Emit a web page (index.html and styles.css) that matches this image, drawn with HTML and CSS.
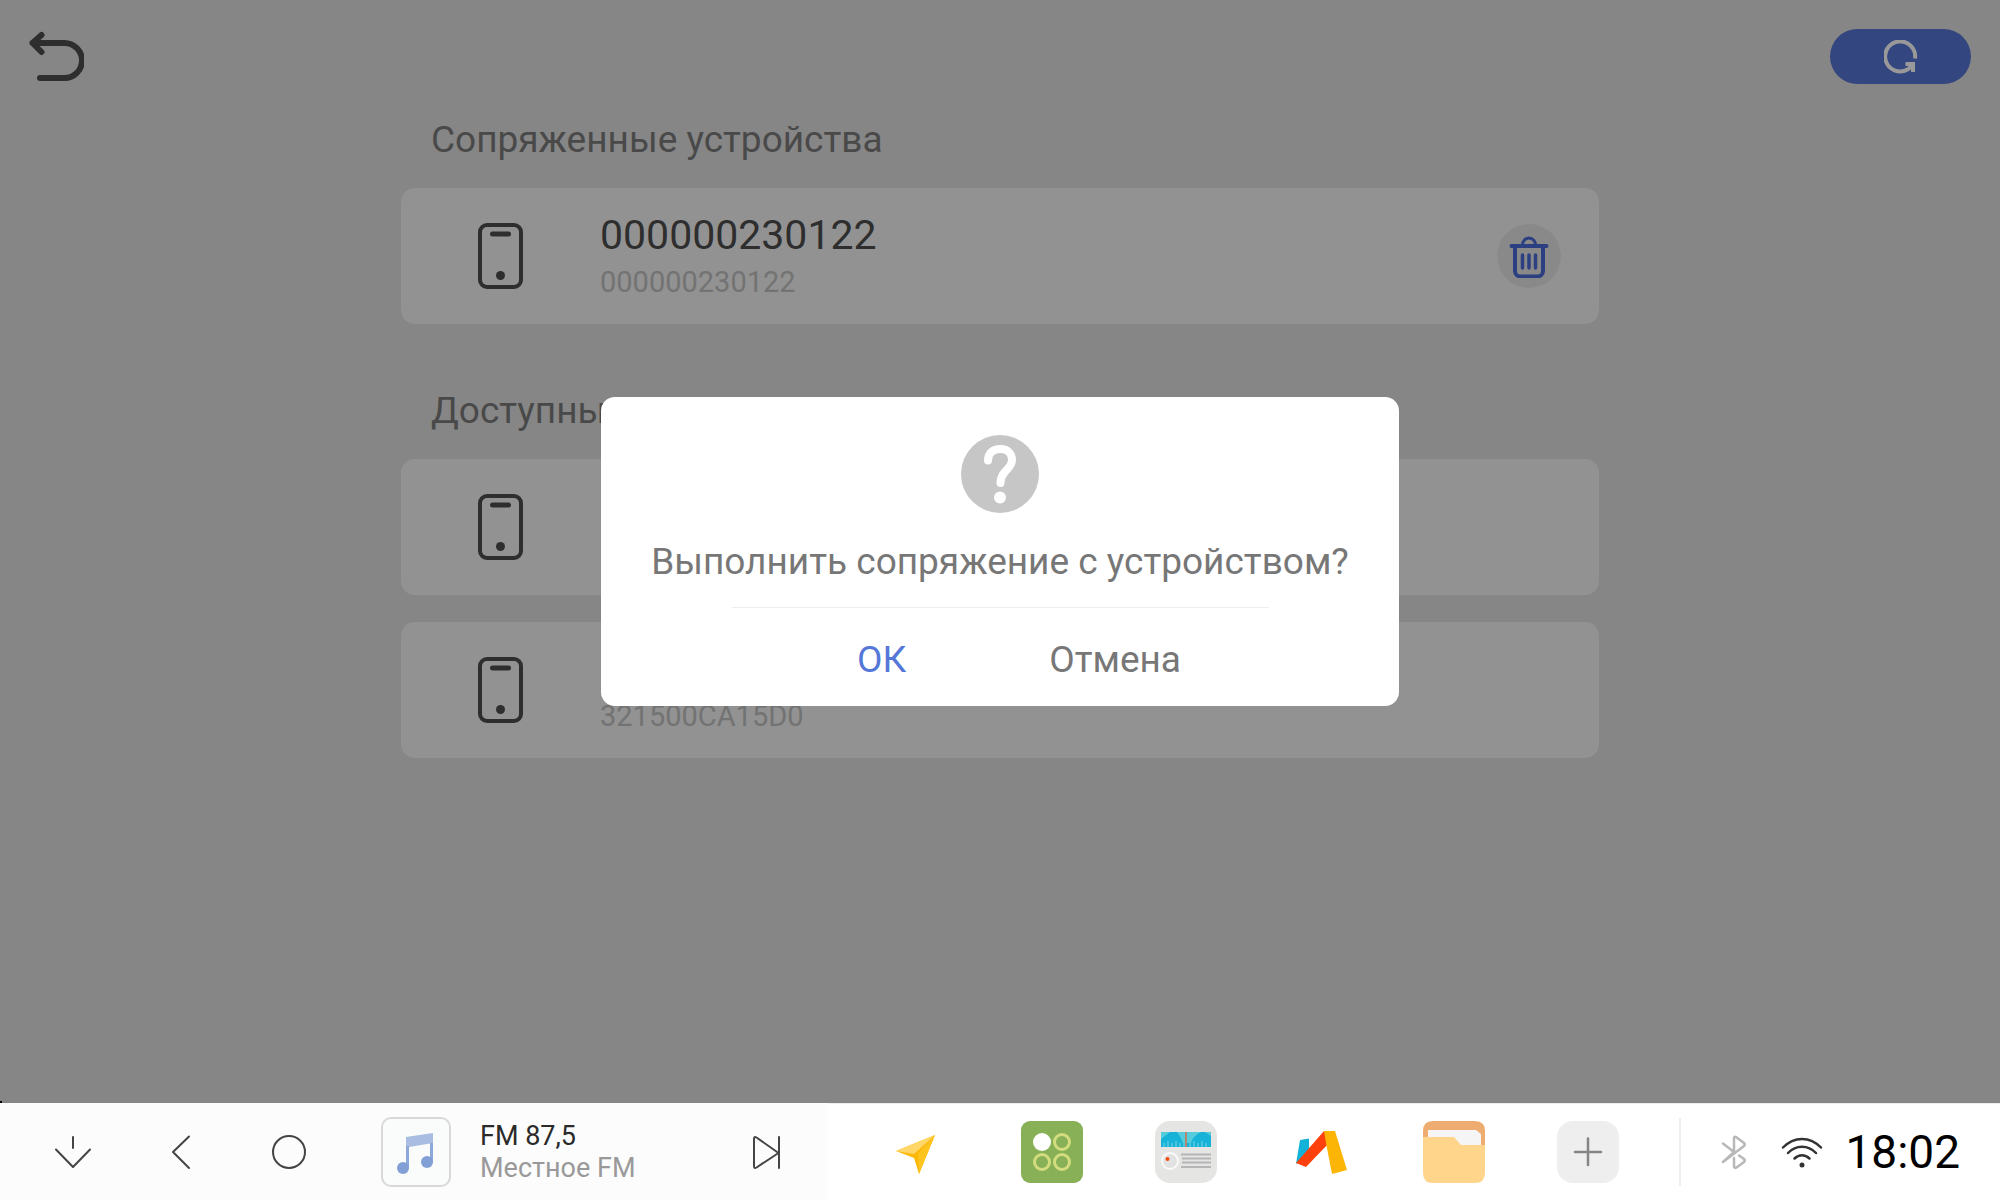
FILE: index.html
```
<!DOCTYPE html>
<html lang="ru">
<head>
    <meta charset="UTF-8">
    <meta name="viewport" content="width=device-width, initial-scale=1.0">
    <title>Bluetooth</title>
    <link rel="stylesheet" href="styles.css">
</head>
<body>
    <svg class="sprite" aria-hidden="true">
        <symbol id="phone" viewBox="0 0 46 66">
            <rect x="3" y="2" width="41" height="62" rx="7" fill="none" stroke="currentColor" stroke-width="4"/>
            <path d="M15.500 11h16" stroke="currentColor" stroke-width="5" stroke-linecap="round"/>
            <circle cx="23.500" cy="52.500" r="4.500" fill="currentColor"/>
        </symbol>
    </svg>

    <main class="screen">
        <header class="top">
            <button class="back" type="button" aria-label="Назад">
                <svg width="56" height="52" viewBox="0 0 56 52" fill="none" stroke="currentColor" stroke-width="6" stroke-linecap="round" stroke-linejoin="round">
                    <path d="M5 14H36.500a17.500 17.500 0 0 1 0 35H12"/>
                    <path d="M13.500 6L4.500 14L13.500 23"/>
                </svg>
            </button>
            <button class="refresh" type="button" aria-label="Обновить">
                <svg width="34" height="34" viewBox="0 0 34 34" fill="none" stroke="currentColor" stroke-width="4">
                    <path d="M31 18.500A15 15 0 1 0 23.500 29.500L28 26"/>
                    <path d="M21.500 24H29V32" stroke-width="4"/>
                </svg>
            </button>
        </header>

        <div class="list">
            <section class="group">
                <h2>Сопряженные устройства</h2>
                <div class="card">
                    <svg class="phone"><use href="#phone"/></svg>
                    <div class="info">
                        <p class="name">000000230122</p>
                        <p class="addr">000000230122</p>
                    </div>
                    <button class="del" type="button" aria-label="Удалить">
                        <svg width="40" height="44" viewBox="0 0 40 44" fill="none" stroke="currentColor" stroke-width="4">
                            <path d="M2.500 12H37.500" stroke-linecap="round"/>
                            <path d="M13.500 11a6.500 7 0 0 1 13 0" stroke-width="3"/>
                            <path d="M6 12V37a5.500 5.500 0 0 0 5.500 5.500H28.500a5.500 5.500 0 0 0 5.500-5.500V12"/>
                            <path d="M13.500 21V34M20 21V34M26.500 21V34" stroke-width="3.500" stroke-linecap="round"/>
                        </svg>
                    </button>
                </div>
            </section>

            <section class="group">
                <h2>Доступные устройства</h2>
                <div class="card">
                    <svg class="phone"><use href="#phone"/></svg>
                </div>
                <div class="card">
                    <svg class="phone"><use href="#phone"/></svg>
                    <div class="info">
                        <p class="name"></p>
                        <p class="addr">321500CA15D0</p>
                    </div>
                </div>
            </section>
        </div>

        <div class="mask">
            <div class="dialog" role="dialog" aria-modal="true" aria-labelledby="ask">
                <svg class="question" width="78" height="78" viewBox="0 0 78 78">
                    <circle cx="39" cy="39" r="39" fill="#c6c6c6"/>
                    <path d="M27 25.500C27 18 32 14 39.500 14C47 14 51 19 51 25C51 34.500 39.500 35.500 39.500 48" fill="none" stroke="#fff" stroke-width="8" stroke-linecap="round"/>
                    <circle cx="39" cy="62.500" r="6" fill="#fff"/>
                </svg>
                <p id="ask">Выполнить сопряжение с устройством?</p>
                <div class="actions">
                    <button class="ok" type="button">ОК</button>
                    <button class="cancel" type="button">Отмена</button>
                </div>
            </div>
        </div>
    </main>

    <footer class="bar">
        <div class="player">
            <div class="keys">
                <button type="button" aria-label="Свернуть">
                    <svg width="36" height="36" viewBox="0 0 36 36"><path d="M18 3V14M1 15.500L18 33L35 15.500"/></svg>
                </button>
                <button type="button" aria-label="Назад">
                    <svg width="36" height="36" viewBox="0 0 36 36"><path d="M26 2.500L10 18L26 34"/></svg>
                </button>
                <button type="button" aria-label="Домой">
                    <svg width="36" height="36" viewBox="0 0 36 36"><circle cx="18" cy="18" r="16"/></svg>
                </button>
            </div>
            <svg class="cover" width="70" height="70" viewBox="0 0 70 70">
                <rect x="1" y="1" width="68" height="68" rx="9" fill="#f9fcfb" stroke="#dcd8da" stroke-width="2"/>
                <path d="M25 20L52 16V26L28 30H25Z" fill="#a9bde2"/>
                <path d="M25 29h3V51h-3zM49 26h3V46h-3z" fill="#8da8da"/>
                <circle cx="22" cy="51" r="6" fill="#83a0d6"/>
                <circle cx="46" cy="45" r="6" fill="#83a0d6"/>
            </svg>
            <div class="track">
                <p class="station">FM 87,5</p>
                <p class="source">Местное FM</p>
            </div>
            <button type="button" aria-label="Следующая">
                <svg width="36" height="36" viewBox="0 0 36 36"><path d="M6 5V32Q6 35 8.500 33.500L30.500 19L8.500 3.500Q6 2 6 5ZM31 3V34"/></svg>
            </button>
        </div>

        <nav class="apps">
            <a href="#" aria-label="Навигатор">
                <svg viewBox="0 0 62 62">
                    <path d="M9 30L48 14L32 53L27 37Z" fill="#fcb90a"/>
                    <path d="M9 30L48 14L27 33Z" fill="#ffd668"/>
                    <path d="M48 14L32 53L31 33Z" fill="#fdc41f"/>
                </svg>
            </a>
            <a href="#" aria-label="Приложения">
                <svg viewBox="0 0 62 62">
                    <rect width="62" height="62" rx="9" fill="#88b056"/>
                    <circle cx="21" cy="21" r="9" fill="#fff"/>
                    <g fill="none" stroke="#d3dd7e" stroke-width="3">
                        <circle cx="41" cy="21" r="7.500"/>
                        <circle cx="21" cy="41" r="7.500"/>
                        <circle cx="41" cy="41" r="7.500"/>
                    </g>
                </svg>
            </a>
            <a href="#" aria-label="Радио">
                <svg viewBox="0 0 62 62">
                    <rect width="62" height="62" rx="15" fill="#e5e5e3"/>
                    <path d="M6 11H56V26H6Z" fill="#16b2d8"/>
                    <path d="M6 11H15L6 18ZM22 11H46Q38 15 36 22H28Q26 16 22 11ZM50 11H56V15Z" fill="#56cbdc"/>
                    <path d="M9 22v4M13 20v6M17 22v4M21 20v6M25 22v4M29 22v4M35 22v4M39 20v6M43 22v4M47 20v6M51 22v4" stroke="#7cd6e4"/>
                    <path d="M31 11V26" stroke="#b0886e" stroke-width="2"/>
                    <circle cx="15" cy="40" r="8" fill="#e2e2e2" stroke="#fafafa" stroke-width="2"/>
                    <circle cx="12.500" cy="38" r="2" fill="#fa4a10"/>
                    <path d="M26 33.500H56M27 37.500H56M27 41.500H56M26 46H56" stroke="#b4b6b6" stroke-width="2"/>
                </svg>
            </a>
            <a href="#" aria-label="Авто">
                <svg viewBox="0 0 62 62">
                    <path d="M11 19L20 17.500V34L7 43Z" fill="#14b2d8"/>
                    <path d="M35 10L40 12V22L17 46L7 42Z" fill="#fd400c"/>
                    <path d="M35 10H46L58 49L43 53L37 22Z" fill="#fdb505"/>
                </svg>
            </a>
            <a href="#" aria-label="Файлы">
                <svg viewBox="0 0 62 62">
                    <path d="M0 30V10Q0 0 10 0H52Q62 0 62 10V30Z" fill="#efac70"/>
                    <path d="M5 9H53L58 13V26H5Z" fill="#f5f5f5"/>
                    <path d="M0 16H31L38 24H62V52Q62 62 52 62H10Q0 62 0 52Z" fill="#fed58a"/>
                </svg>
            </a>
            <a href="#" aria-label="Добавить">
                <svg viewBox="0 0 62 62">
                    <rect width="62" height="62" rx="16" fill="#eee"/>
                    <path d="M18 31H44M31 17.500V44" stroke="#858585" stroke-width="2.500" stroke-linecap="round"/>
                </svg>
            </a>
        </nav>

        <div class="status">
            <svg width="30" height="36" viewBox="0 0 30 36" fill="none" stroke="#b8b8b8" stroke-width="2.500" stroke-linecap="round" stroke-linejoin="round">
                <path d="M4 9.500L15 18L4 28M15 18V4Q15 2 17 3L25 9Q26.500 10.500 25 12L4 28M15 24V32Q15 34.500 17.500 33.500L25 28Q26.500 26.500 25 25L20 21.500"/>
            </svg>
            <svg width="42" height="32" viewBox="0 0 42 32" fill="none" stroke="#333" stroke-width="2.500" stroke-linecap="round">
                <path d="M2 11.500C13 0 29 0 40 11.500M7 17C15 8.500 27 8.500 35 17M13.500 22.500C18 18 24 18 28.500 22.500"/>
                <circle cx="21" cy="29" r="2.500" fill="#333" stroke="none"/>
            </svg>
            <time datetime="18:02">18:02</time>
        </div>
    </footer>
</body>
</html>
```
FILE: styles.css
```
*{
    margin: 0;
    padding: 0;
    box-sizing: border-box;
}
body{
    display: flex;
    flex-direction: column;
    min-height: 100vh;
    font-family: Roboto, "Noto Sans", sans-serif;
    background: #fff;
}
button{
    border: 0;
    background: none;
    font: inherit;
    color: inherit;
    cursor: pointer;
}
svg{
    display: block;
    flex-shrink: 0;
}
.sprite{
    position: absolute;
    width: 0;
    height: 0;
}

/* device list */
.screen{
    position: relative;
    flex: 1;
    background: #e0e0e0;
    color: #4e4e4e;
}
.top{
    display: flex;
    justify-content: space-between;
    align-items: flex-start;
    padding: 29px 29px 0 28px;
}
.refresh{
    display: flex;
    justify-content: center;
    align-items: center;
    width: 141px;
    height: 55px;
    border-radius: 28px;
    background: #5775d4;
    color: #fff;
}
.list{
    width: 90%;
    max-width: 1198px;
    margin: 0 auto;
    padding-top: 32px;
}
.group{
    margin-bottom: 63px;
}
h2{
    padding: 0 30px;
    margin-bottom: 24px;
    font-size: 37px;
    line-height: 48px;
    font-weight: 400;
    color: #7b7b7b;
}
.card{
    display: flex;
    align-items: center;
    height: 136px;
    padding: 0 38px 0 76px;
    margin-bottom: 27px;
    border-radius: 14px;
    background: #f4f4f4;
}
.phone{
    width: 46px;
    height: 66px;
}
.info{
    flex: 1;
    margin-left: 77px;
    padding-top: 4px;
}
.name{
    min-height: 48px;
    font-size: 41px;
    line-height: 48px;
}
.addr{
    font-size: 29px;
    line-height: 46px;
    color: #c0c0c0;
}
.del{
    display: flex;
    justify-content: center;
    align-items: center;
    width: 64px;
    height: 64px;
    border-radius: 50%;
    background: #e5e5e5;
    color: #486ad8;
}

/* dialog */
.mask{
    position: absolute;
    inset: 0;
    display: flex;
    justify-content: center;
    align-items: center;
    background: rgba(0,0,0,.4);
}
.mask::after{
    content: "";
    position: absolute;
    left: 0;
    bottom: 0;
    width: 2px;
    height: 2px;
    background: #000;
}
.dialog{
    display: flex;
    flex-direction: column;
    align-items: center;
    width: 798px;
    max-width: 90%;
    padding: 38px 40px 22px;
    border-radius: 14px;
    background: #fff;
    font-size: 37px;
    line-height: 48px;
    color: #777;
}
#ask{
    margin-top: 25px;
}
.actions{
    display: flex;
    justify-content: center;
    gap: 143px;
    width: 537px;
    max-width: 100%;
    margin-top: 21px;
    padding: 28px 0 0 38px;
    border-top: 1px solid #eee;
}
.ok{
    color: #5577d8;
}

/* bottom bar */
.bar{
    display: flex;
    height: 97px;
    box-shadow: inset 0 1px #eee;
}
.player{
    display: flex;
    align-items: center;
    flex: 0 0 828px;
    padding: 0 44px 0 55px;
    background: #fcfcfc;
}
.player button svg{
    fill: none;
    stroke: #444;
    stroke-width: 2;
    stroke-linejoin: round;
    stroke-linecap: round;
}
.keys{
    display: flex;
    gap: 72px;
    margin-right: 74px;
}
.track{
    flex: 1;
    margin-left: 29px;
    font-size: 27px;
    line-height: 32px;
}
.station{
    color: #2a2a2a;
}
.source{
    color: #999;
}
.apps{
    display: flex;
    align-items: center;
    gap: 72px;
    padding-left: 59px;
}
.apps svg{
    width: 62px;
    height: 62px;
}
.status{
    display: flex;
    align-items: center;
    align-self: center;
    height: 68px;
    margin-left: auto;
    padding: 0 40px 0 38px;
    border-left: 2px solid #eee;
}
.status svg + svg{
    margin: 0 22px 0 32px;
}
time{
    font-size: 46px;
    line-height: 56px;
    color: #000;
}
```
